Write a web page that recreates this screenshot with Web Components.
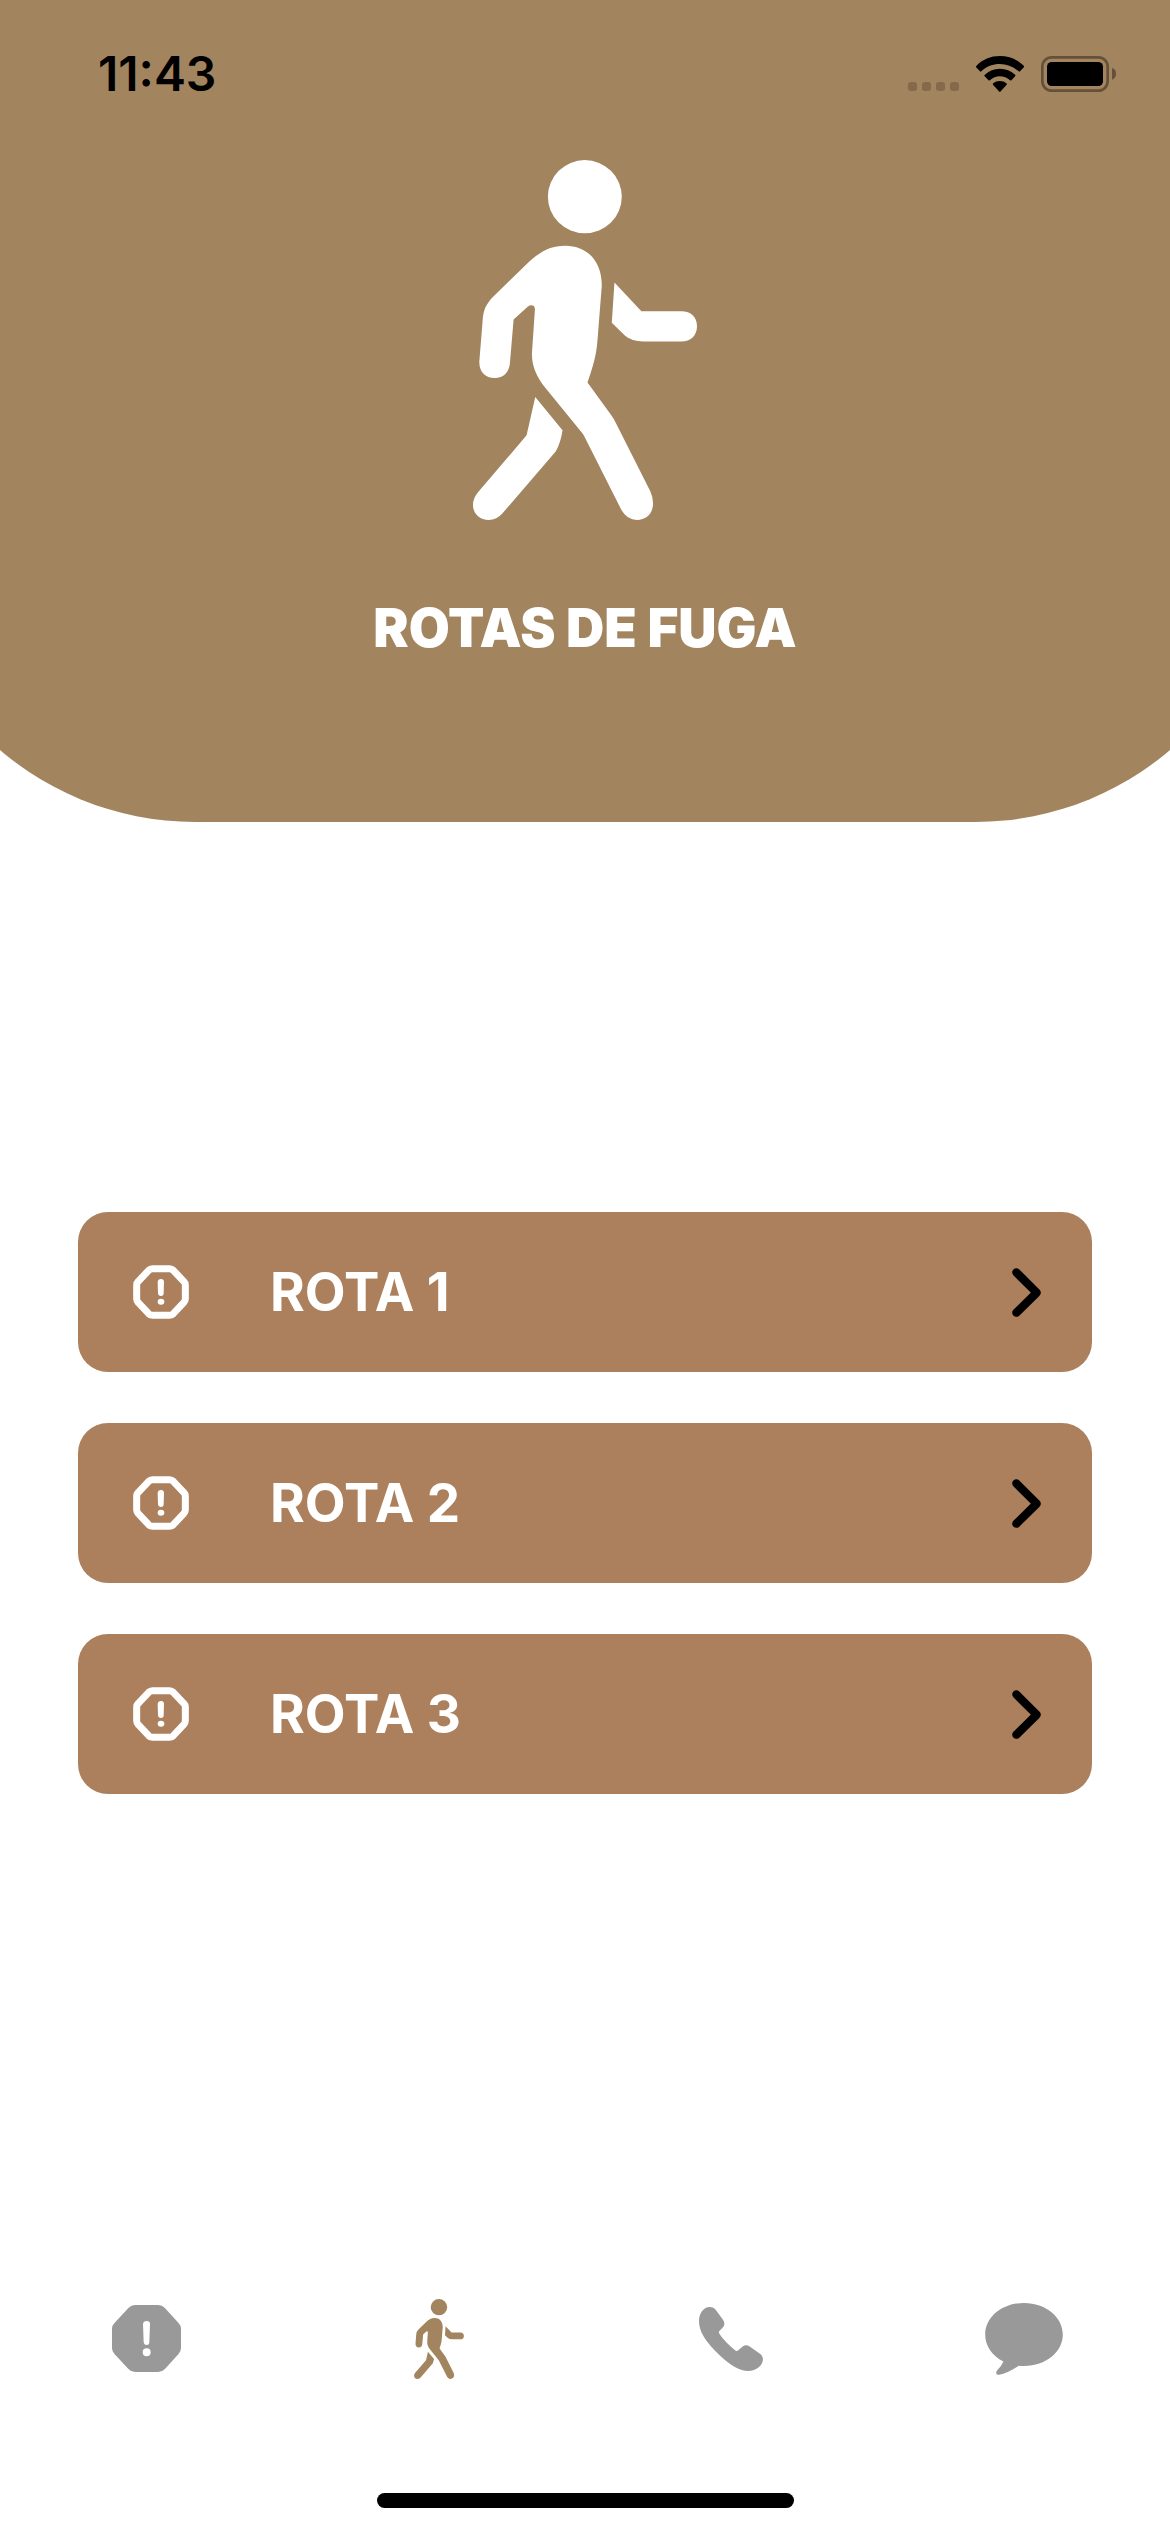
<!DOCTYPE html>
<html lang="pt-BR">
<head>
<meta charset="utf-8">
<meta name="viewport" content="width=device-width, initial-scale=1">
<title>Rotas de fuga</title>
<style>
  html, body { margin: 0; height: 100%; background: #fff; }
</style>
</head>
<body>
<escape-app></escape-app>
<script>
const define = (name, html) => {
  const tpl = document.createElement('template');
  tpl.innerHTML = html;
  customElements.define(name, class extends HTMLElement {
    constructor() {
      super();
      this.attachShadow({ mode: 'open' }).append(tpl.content.cloneNode(true));
    }
  });
};

define('walk-icon', `
<style>:host{display:block} svg{display:block;width:100%;height:100%;fill:currentColor}</style>
<svg viewBox="69 59 673 1081" aria-hidden="true">
  <ellipse cx="405" cy="169" rx="111" ry="110"/>
  <path d="M346 316C412 316 456 362 456 436L443 600C440 645 428 684 413 727L484 825Q492 836 499 850L602 1055Q610 1072 610 1091C610 1120 590 1140 562 1140Q532 1140 515 1110L404 890Q402 885 397 879L288 745C260 710 246 680 246 640L255 508Q255 495 244 495Q239 495 234 499L191 538L180 668C178 696 161 714 134 714C105 714 87 694 88 664L98 540C100 510 108 492 128 471L232 370C271 333 300 316 346 316Z"/>
  <path d="M494 427L575 513H695C724 513 742 531 742 558C742 586 723 604 695 604H580Q546 604 526 587L486 548Z"/>
  <path d="M256 771L338 871Q333 905 320 930Q317 936 311 942L157 1121Q141 1140 116 1140C88 1140 69 1121 69 1095Q69 1075 84 1057L230 886Z"/>
</svg>`);

define('status-bar', `
<style>
  :host{display:flex;align-items:center;justify-content:space-between;height:56px;padding:46px 54px 0 98px;color:#000}
  time{font:600 48px/56px Inter,"Liberation Sans",sans-serif}
  .signals{display:flex;align-items:center;gap:17px}
  svg{display:block}
</style>
<time>11:43</time>
<div class="signals">
  <svg width="51" height="36" viewBox="0 0 51 36" fill="#84694b" aria-hidden="true">
    <rect y="26" width="9" height="9" rx="3"/><rect x="14" y="26" width="9" height="9" rx="3"/><rect x="28" y="26" width="9" height="9" rx="3"/><rect x="42" y="26" width="9" height="9" rx="3"/>
  </svg>
  <svg width="48" height="36" viewBox="0 0 145 108" aria-hidden="true">
    <path d="M72 0C100 0 125 10 145 30Q146 32 144 34L133 46Q131 48 129 46C112 31 93 24 72 24S32 31 16 46Q14 48 12 46L1 34Q-1 32 1 30C20 10 44 0 72 0Z"/>
    <path d="M72 38Q99 38 119 57Q120 59 118 61L107 73Q105 75 103 73Q89 61 72 61T42 73Q40 75 38 73L26 61Q24 59 26 57Q46 38 72 38Z"/>
    <path d="M72 75Q84 75 92 82Q94 84 92 87L74 107Q72 109 70 107L52 87Q50 84 52 82Q60 75 72 75Z"/>
  </svg>
  <svg width="75" height="36" viewBox="0 0 225 108" aria-hidden="true">
    <rect x="4" y="4" width="196" height="100" rx="28" fill="none" stroke="#655139" stroke-width="8"/>
    <rect x="18" y="18" width="168" height="72" rx="14"/><path d="M213 36Q225 40 225 53T213 71Z" fill="#655139"/>
  </svg>
</div>`);

define('page-header', `
<style>
  :host{display:block;margin:0 -9%;padding:0 9%;background:#a2845e;border-radius:0 0 300px 300px;color:#fff}
  walk-icon{width:224px;height:360px;margin:58px auto 0}
  h1{margin:0;padding:73px 0 159px;text-align:center;font:900 53px/70px Inter,"Noto Sans",sans-serif}
</style>
<status-bar></status-bar>
<walk-icon></walk-icon>
<h1><slot></slot></h1>`);

define('route-button', `
<style>
  :host{display:block}
  button{display:flex;align-items:center;gap:81px;width:100%;height:160px;margin:0;padding:0 51px 0 55px;border:0;border-radius:30px;background:#ad805d;color:#fff;text-align:left;font:700 53px/70px Inter,"Noto Sans",sans-serif;cursor:pointer}
  span{flex:1}
  svg{display:block;flex:none}
</style>
<button type="button">
  <svg width="56" height="54" viewBox="0 0 168 162" aria-hidden="true">
    <path d="M58 11H110Q116 11 121 16L152 49Q157 54 157 60V102Q157 108 152 113L121 146Q116 151 110 151H58Q52 151 47 146L16 113Q11 108 11 102V60Q11 54 16 49L47 16Q52 11 58 11Z" fill="none" stroke="#fff" stroke-width="21"/>
    <path d="M74 51Q75 42 84 42T93 51L92 85Q92 93 84 93T75 85Z" fill="#fff"/><ellipse cx="84" cy="110" rx="10" ry="9" fill="#fff"/>
  </svg>
  <span><slot></slot></span>
  <svg width="29" height="49" viewBox="0 0 87 147" fill="none" stroke="#000" stroke-width="25" stroke-linecap="round" stroke-linejoin="round" aria-hidden="true"><path d="M13 13L74 74L13 134"/></svg>
</button>`);

define('tab-bar', `
<style>
  :host{display:block}
  nav{display:flex;height:309px}
  a{flex:1;display:flex;align-items:center;justify-content:center;color:#999}
  a[aria-current]{color:#a2845e}
  svg{display:block;fill:currentColor}
  walk-icon{width:50px;height:80px}
  .home{width:417px;height:15px;margin:0 auto 24px;border-radius:8px;background:#000}
</style>
<nav>
  <a href="#alertas" aria-label="Alertas"><svg width="69" height="67" viewBox="66 78 207 201" aria-hidden="true">
    <path fill-rule="evenodd" d="M135 78H205Q216 78 224 86L265 131Q273 139 273 149V208Q273 218 265 226L224 271Q216 279 205 279H135Q124 279 116 271L74 226Q66 218 66 208V149Q66 139 74 131L116 86Q124 78 135 78ZM159 136L161 189Q162 198 170 198T178 189L180 136Q180 126 170 126T159 136ZM158 220A12 12 0 1 0 182 220A12 12 0 1 0 158 220Z"/></svg></a>
  <a href="#rotas" aria-label="Rotas de fuga" aria-current="page"><walk-icon></walk-icon></a>
  <a href="#telefones" aria-label="Telefones"><svg width="64" height="64" viewBox="60 84 192 192" aria-hidden="true">
    <path d="M92 84Q104 84 111 94L131 121Q136 128 136 135Q136 142 130 147L121 156Q118 159 121 164Q130 178 144 192T170 215Q174 218 178 214L188 205Q194 199 201 199Q207 199 213 203L244 225Q252 231 252 240C252 258 233 276 207 276Q171 276 122 229C78 187 60 157 60 126C60 103 74 84 92 84Z"/></svg></a>
  <a href="#mensagens" aria-label="Mensagens"><svg width="78" height="72" viewBox="75 69 234 217" aria-hidden="true">
    <path d="M192 69C258 69 309 112 309 164S258 259 192 259Q184 259 176 258Q142 281 117 285Q108 287 108 279Q108 276 112 271Q125 257 130 245C96 229 75 198 75 164C75 112 126 69 192 69Z"/></svg></a>
</nav>
<div class="home"></div>`);

define('escape-app', `
<style>
  :host{display:flex;flex-direction:column;min-height:100%;overflow-x:hidden;background:#fff}
  main{flex:1;display:flex;flex-direction:column;justify-content:center;gap:51px;padding:0 78px}
</style>
<page-header>ROTAS DE FUGA</page-header>
<main>
  <route-button>ROTA 1</route-button>
  <route-button>ROTA 2</route-button>
  <route-button>ROTA 3</route-button>
</main>
<tab-bar></tab-bar>`);
</script>
</body>
</html>
